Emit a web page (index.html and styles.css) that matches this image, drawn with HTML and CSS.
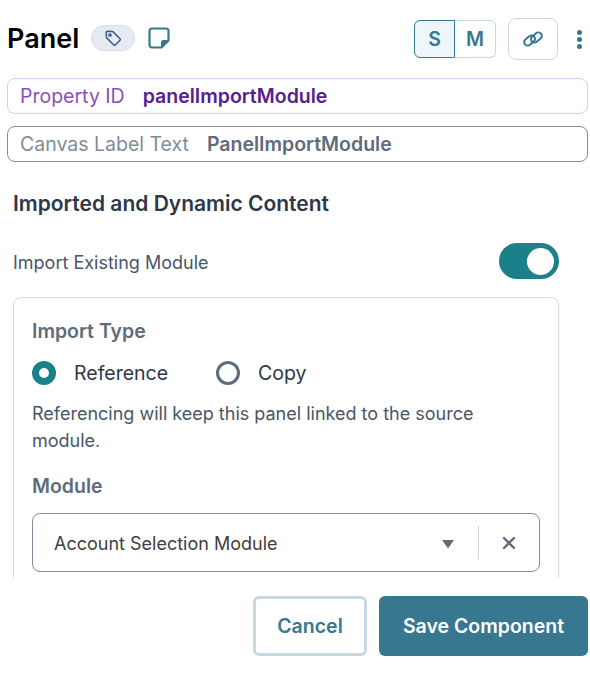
FILE: index.html
```html
<!DOCTYPE html>
<html lang="en">
<head>
    <meta charset="UTF-8">
    <meta name="viewport" content="width=device-width, initial-scale=1.0">
    <title>Panel</title>
    <link rel="stylesheet" href="styles.css">
</head>
<body>

    <div class="editor">
        <div class="editor-body">

            <!-- Header -->
            <div class="header">
                <div class="header-title">
                    <h1>Panel</h1>
                    <span class="tag-pill">
                        <svg width="18" height="18" viewBox="0 0 18 18" fill="none" stroke="#3f5a85" stroke-width="1.5" stroke-linejoin="round">
                            <path d="M2.2 3.4 a1.2 1.2 0 0 1 1.2-1.2 L8.6 2.4 L16 9.8 a1 1 0 0 1 0 1.4 L11.2 16 a1 1 0 0 1-1.4 0 L2.4 8.6 Z"/>
                            <circle cx="6" cy="6" r="1.1"/>
                        </svg>
                    </span>
                    <svg class="note-icon" width="22" height="22" viewBox="0 0 22 22">
                        <path d="M4 1.5 H18 a2.5 2.5 0 0 1 2.5 2.5 V13.5 L13.5 20.5 H4 a2.5 2.5 0 0 1-2.5-2.5 V4 A2.5 2.5 0 0 1 4 1.5 Z" fill="none" stroke="#37778f" stroke-width="2.2" stroke-linejoin="round"/>
                        <path d="M21 13 H15.5 a2.5 2.5 0 0 0-2.5 2.5 V21 Z" fill="#37778f"/>
                    </svg>
                </div>
                <div class="header-actions">
                    <div class="size-toggle">
                        <button class="size-btn size-active">S</button>
                        <button class="size-btn">M</button>
                    </div>
                    <button class="link-btn">
                        <svg width="20" height="20" viewBox="0 0 20 20" fill="none" stroke="#37778f" stroke-width="2">
                            <rect x="0.6" y="8" width="12" height="7" rx="3.5" transform="rotate(-40 6.6 11.5)"/>
                            <rect x="7.4" y="5" width="12" height="7" rx="3.5" transform="rotate(-40 13.4 8.5)"/>
                        </svg>
                    </button>
                    <div class="more-btn"><i></i><i></i><i></i></div>
                </div>
            </div>

            <!-- Name fields -->
            <div class="field field-id">
                <span class="field-label">Property ID</span>
                <span class="field-value">panelImportModule</span>
            </div>
            <div class="field field-canvas">
                <span class="field-label">Canvas Label Text</span>
                <span class="field-value">PanelImportModule</span>
            </div>

            <div class="section">
                <h2>Imported and Dynamic Content</h2>

                <div class="toggle-row">
                    <span class="toggle-label">Import Existing Module</span>
                    <div class="toggle"><div class="toggle-knob"></div></div>
                </div>

                <div class="card">
                    <h3>Import Type</h3>
                    <div class="radio-row">
                        <label class="radio-item"><span class="radio radio-on"></span>Reference</label>
                        <label class="radio-item"><span class="radio"></span>Copy</label>
                    </div>
                    <p>Referencing will keep this panel linked to the source module.</p>
                    <h3 class="module-title">Module</h3>
                    <div class="select">
                        <span class="select-text">Account Selection Module</span>
                        <svg class="select-arrow" width="14" height="10" viewBox="0 0 14 10"><path d="M1 1 H13 L7 9.5 Z" fill="#5f6b7c"/></svg>
                        <span class="select-divider"></span>
                        <svg class="select-clear" width="14" height="14" viewBox="0 0 14 14" stroke="#5f6b7c" stroke-width="2.4" stroke-linecap="round"><path d="M2 2 L12 12 M12 2 L2 12"/></svg>
                    </div>
                </div>
            </div>
        </div>

        <!-- Footer buttons -->
        <div class="footer">
            <button class="btn-cancel">Cancel</button>
            <button class="btn-save">Save Component</button>
        </div>
    </div>

</body>
</html>
```

FILE: styles.css
```css
html, body {
    margin: 0;
    padding: 0;
    height: 100%;
    background-color: #fff;
}
body {
    font-family: 'Inter', 'Liberation Sans', sans-serif;
    color: #2d3748;
}
button {
    font-family: inherit;
    cursor: pointer;
    background: #fff;
}
.editor {
    width: 590px;
    height: 676px;
    overflow: hidden;
}
.editor-body {
    height: 578px;
    overflow: hidden;
    box-sizing: border-box;
    padding: 18px 2px 0 7px;
}
.header {
    display: flex;
    align-items: center;
    height: 42px;
    margin-bottom: 18px;
}
.header-title {
    display: flex;
    align-items: center;
    margin-bottom: 2px;
}
h1 {
    margin: 0 12px 0 0;
    font-size: 27px;
    font-weight: 600;
    color: #000;
}
.tag-pill {
    display: flex;
    align-items: center;
    justify-content: center;
    box-sizing: border-box;
    width: 44px;
    height: 26px;
    background-color: #e6ebf3;
    border: 1px solid #d5dde6;
    border-radius: 13px;
    margin-right: 13px;
}
.note-icon {
    display: block;
}
.header-actions {
    display: flex;
    align-items: center;
    margin-left: auto;
}
.size-toggle {
    display: flex;
    margin-right: 12px;
}
.size-btn {
    box-sizing: border-box;
    width: 41px;
    height: 38px;
    padding: 0;
    font-size: 19.5px;
    font-weight: 600;
    color: #37778f;
    border: 1px solid #c6d8e2;
    border-radius: 0 6px 6px 0;
    border-left: none;
}
.size-active {
    background-color: #eff6fa;
    border: 1px solid #37778f;
    border-radius: 6px 0 0 6px;
}
.link-btn {
    display: flex;
    align-items: center;
    justify-content: center;
    box-sizing: border-box;
    width: 50px;
    height: 42px;
    padding: 0;
    border: 1px solid #c6d8e2;
    border-radius: 8px;
}
.more-btn {
    display: flex;
    flex-direction: column;
    align-items: center;
    gap: 2px;
    width: 18px;
    margin-left: 12px;
}
.more-btn i {
    display: block;
    width: 5px;
    height: 5px;
    border-radius: 50%;
    background-color: #37778f;
}
.field {
    display: flex;
    align-items: center;
    gap: 18px;
    box-sizing: border-box;
    height: 36px;
    padding: 0 12px;
    border-radius: 8px;
    font-size: 19.5px;
}
.field-value {
    font-weight: 600;
}
.field-id {
    border: 1px solid #e6c4f5;
    margin-bottom: 12px;
}
.field-id .field-label {
    color: #8a4fc0;
}
.field-id .field-value {
    color: #55218f;
}
.field-canvas {
    border: 1px solid #828c9a;
}
.field-canvas .field-label {
    color: #808b98;
}
.field-canvas .field-value {
    color: #606b7c;
}
.section {
    padding: 0 29px 0 6px;
}
h2 {
    margin: 30px 0 0;
    font-size: 21px;
    line-height: 24px;
    font-weight: 600;
    color: #2d3748;
}
.toggle-row {
    display: flex;
    align-items: center;
    justify-content: space-between;
    margin-top: 27px;
    font-size: 18px;
    color: #4a5568;
}
.toggle-label {
    padding-top: 2px;
}
.toggle {
    display: flex;
    align-items: center;
    justify-content: flex-end;
    box-sizing: border-box;
    width: 60px;
    height: 36px;
    padding: 0 5px;
    border-radius: 18px;
    background-color: #1b808a;
}
.toggle-knob {
    width: 27px;
    height: 27px;
    border-radius: 50%;
    background-color: #fff;
}
.card {
    margin-top: 18px;
    padding: 21px 18px 30px;
    border: 1px solid #d5dde6;
    border-radius: 8px;
}
h3 {
    margin: 0;
    font-size: 19.5px;
    line-height: 24px;
    font-weight: 600;
    color: #606b7c;
}
.radio-row {
    display: flex;
    gap: 48px;
    margin-top: 18px;
}
.radio-item {
    display: flex;
    align-items: center;
    gap: 18px;
    font-size: 19.5px;
    line-height: 24px;
}
.radio {
    box-sizing: border-box;
    width: 24px;
    height: 24px;
    border-radius: 50%;
    border: 3px solid #606b7c;
}
.radio-on {
    border: 7px solid #1b808a;
}
p {
    margin: 15px 0 0;
    font-size: 18px;
    line-height: 27px;
    color: #4a5568;
}
.module-title {
    margin-top: 20px;
}
.select {
    display: flex;
    align-items: center;
    box-sizing: border-box;
    height: 59px;
    margin-top: 15px;
    padding: 0 24px 0 21px;
    border: 1px solid #828c9a;
    border-radius: 8px;
    font-size: 18px;
    color: #404040;
}
.select-text {
    flex: 1;
    padding-top: 2px;
}
.select-arrow {
    display: block;
    margin-top: 2px;
}
.select-divider {
    width: 1px;
    height: 33px;
    margin: 0 23px;
    background-color: #ccd2d9;
}
.select-clear {
    display: block;
    margin-right: -1px;
}
.footer {
    display: flex;
    justify-content: flex-end;
    gap: 12px;
    padding: 18px 2px 0 0;
}
.btn-cancel, .btn-save {
    box-sizing: border-box;
    height: 60px;
    padding: 0;
    border-radius: 6px;
    font-size: 19.5px;
    font-weight: 600;
}
.btn-cancel {
    width: 114px;
    border: 3px solid #c6d8e2;
    color: #37778f;
}
.btn-save {
    width: 209px;
    border: none;
    background-color: #37778f;
    color: #fff;
}
```
